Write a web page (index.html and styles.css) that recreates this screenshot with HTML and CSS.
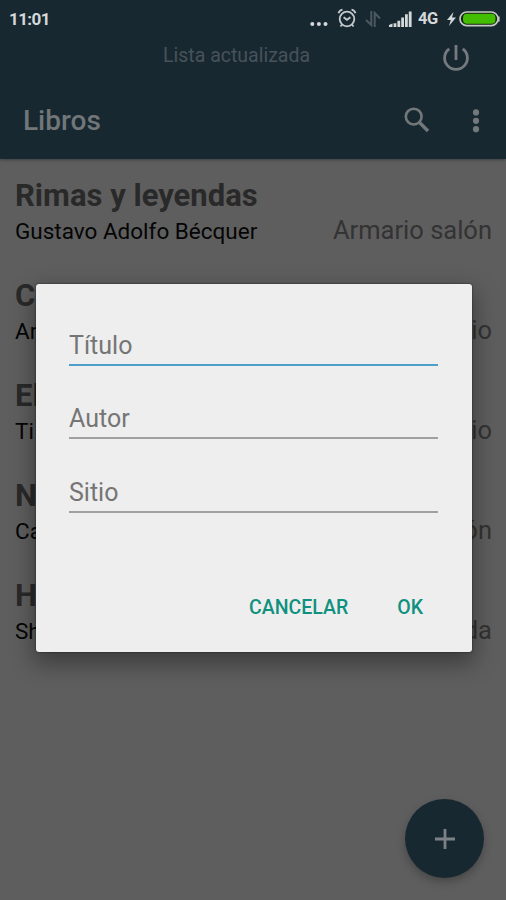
FILE: index.html
```
<!DOCTYPE html>
<html lang="es">

<head>
    <meta charset="utf-8">
    <title>Libros</title>
    <link rel="stylesheet" href="styles.css">
</head>

<body>
    <header>
        <div class="status">
            <span class="time">11:01</span>
            <svg class="dots" width="18" height="6" viewBox="0 0 18 6"><circle cx="2.3" cy="3" r="2"/><circle cx="8.9" cy="3" r="2"/><circle cx="15.5" cy="3" r="2"/></svg>
            <svg class="alarm" width="20" height="20" viewBox="0 0 20 20"><circle cx="10" cy="11" r="7.3"/><path d="M6.6 9.2L10 11.8L13.4 9.2M1.5 5.2Q2.3 2.2 5.5 1.6M18.5 5.2Q17.7 2.2 14.5 1.6M5 16.5L3.5 18.5M15 16.5L16.5 18.5"/></svg>
            <svg class="data" width="16" height="16" viewBox="0 0 16 16"><path d="M6.3 0V14L1 9M9.7 16V2L15 7.5"/></svg>
            <svg class="signal" width="23" height="16" viewBox="0 0 23 16"><path d="M0 16V14L3.5 12.5V16ZM4.6 16V12.2H7.4V16ZM8.4 16V9.8H11.2V16ZM12.2 16V6.5H15V16ZM16 16V3.3H18.8V16ZM19.8 16V.5H22.6V16Z"/></svg>
            <span class="net">4G</span>
            <svg class="bolt" width="9" height="14" viewBox="0 0 9 14"><path d="M6.5 0L0 8H3.8L2 14L9 5.5H5Z"/></svg>
            <svg class="battery" width="41" height="16" viewBox="0 0 41 16"><rect x="1" y="1" width="38" height="13.6" rx="6.8" fill="#13220f" stroke="#c5cac7" stroke-width="1.7"/><path d="M39.8 5.5V10.5" stroke="#c5cac7" stroke-width="1.6"/><rect x="4" y="2.8" width="32.5" height="10" rx="4" fill="#43bd02"/></svg>
        </div>
        <div class="message">
            <span>Lista actualizada</span>
            <svg class="power" width="28" height="28" viewBox="0 0 28 28"><path d="M14 1V16M7.2 4.8A11.4 11.4 0 1 0 20.8 4.8"/></svg>
        </div>
        <div class="toolbar">
            <h1>Libros</h1>
            <svg class="search" width="26" height="26" viewBox="0 0 26 26"><circle cx="9.7" cy="9.6" r="7.9" stroke-width="2.6"/><path d="M15.5 15.5L24 24" stroke-width="3.4"/></svg>
            <svg class="more" width="8" height="24" viewBox="0 0 8 24"><circle cx="4" cy="3.4" r="3.1"/><circle cx="4" cy="11.8" r="3.1"/><circle cx="4" cy="20.2" r="3.1"/></svg>
        </div>
    </header>

    <main>
        <div class="book">
            <h2>Rimas y leyendas</h2>
            <div class="info"><span class="author">Gustavo Adolfo Bécquer</span><span class="place">Armario salón</span></div>
        </div>
        <div class="book">
            <h2>C</h2>
            <div class="info"><span class="author">Ar</span><span class="place">io</span></div>
        </div>
        <div class="book">
            <h2>El</h2>
            <div class="info"><span class="author">Ti</span><span class="place">io</span></div>
        </div>
        <div class="book">
            <h2>N</h2>
            <div class="info"><span class="author">Ca</span><span class="place">ón</span></div>
        </div>
        <div class="book">
            <h2>H</h2>
            <div class="info"><span class="author">Sh</span><span class="place">da</span></div>
        </div>
    </main>

    <div class="add">
        <svg width="20" height="20" viewBox="0 0 20 20"><path d="M10 0V20M0 10H20"/></svg>
    </div>

    <div class="dialog">
        <div class="field active">Título</div>
        <div class="field">Autor</div>
        <div class="field">Sitio</div>
        <div class="buttons">
            <span>CANCELAR</span>
            <span>OK</span>
        </div>
    </div>
</body>

</html>
```

FILE: styles.css
```
* {
    box-sizing: border-box;
}

body {
    margin: 0;
    height: 900px;
    overflow: hidden;
    position: relative;
    background-color: #5e5e5e;
    font-family: Roboto, sans-serif;
}

h1,
h2 {
    margin: 0;
}

svg {
    display: block;
    flex: none;
}

header {
    height: 159px;
    background-color: #182831;
    box-shadow: 0 1px 3px #3c4045;
}

.status {
    display: flex;
    height: 36px;
    padding: 1px 6px 0 9px;
    align-items: center;
    color: #d4d8da;
    fill: #d4d8da;
}

.time {
    flex: 1;
    font-size: 17px;
    font-weight: bold;
    letter-spacing: -0.6px;
}

.dots {
    margin: 10px 9px 0 0;
}

.alarm {
    margin: 0 8px 2px 0;
    fill: none;
    stroke: #c4c9cc;
    stroke-width: 1.8;
}

.data {
    margin-right: 8px;
    fill: none;
    stroke: #4b585f;
    stroke-width: 2;
}

.signal {
    margin-right: 6px;
}

.net {
    width: 21px;
    margin-right: 8px;
    font-size: 16.5px;
    font-weight: bold;
    letter-spacing: -0.5px;
}

.bolt {
    margin-right: 3px;
}

.message {
    display: flex;
    height: 46px;
    padding: 8px 36px 0 163px;
    justify-content: space-between;
    color: #475259;
    font-size: 19.5px;
    line-height: 24px;
}

.power {
    fill: none;
    stroke: #747a7d;
    stroke-width: 2.8;
}

.toolbar {
    display: flex;
    height: 77px;
    padding: 0 26px 0 23px;
    align-items: center;
}

.toolbar h1 {
    flex: 1;
    color: #717679;
    font-size: 28px;
    font-weight: 500;
}

.search {
    margin: 0 42px 2px 0;
    fill: none;
    stroke: #73787b;
}

.more {
    fill: #73787b;
}

main {
    padding-top: 19px;
}

.book {
    height: 100px;
    padding: 0 14px 0 15px;
}

.book h2 {
    color: #292929;
    font-size: 31px;
    line-height: 36px;
}

.info {
    display: flex;
    justify-content: space-between;
    line-height: 32px;
}

.author {
    padding-top: 1px;
    color: #050505;
    font-size: 22.5px;
}

.place {
    color: #333;
    font-size: 25.5px;
}

.add {
    display: flex;
    position: absolute;
    left: 405px;
    top: 799px;
    width: 79px;
    height: 79px;
    align-items: center;
    justify-content: center;
    border-radius: 50%;
    background-color: #182831;
    box-shadow: 0 4px 8px rgba(0, 0, 0, 0.25);
    stroke: #7b8184;
    stroke-width: 2.8;
}

.dialog {
    position: absolute;
    left: 36px;
    top: 284px;
    width: 436px;
    height: 368px;
    padding: 39px 34px 0 33px;
    border-radius: 3px;
    background-color: #eee;
    box-shadow: 0 0 2px rgba(0, 0, 0, 0.7), 0 9px 22px 3px rgba(0, 0, 0, 0.35);
}

.field {
    height: 43px;
    margin-bottom: 31px;
    border-bottom: 2px solid #a0a0a0;
    color: #757575;
    font-size: 25px;
    line-height: 46px;
}

.field.active {
    height: 43px;
    margin-bottom: 30px;
    border-bottom: 2px solid #4d9fca;
}

.buttons {
    display: flex;
    margin-top: 81px;
    padding-right: 15px;
    justify-content: flex-end;
    gap: 49px;
    color: #10917f;
    font-size: 19.5px;
    font-weight: 500;
    line-height: 28px;
}
```
